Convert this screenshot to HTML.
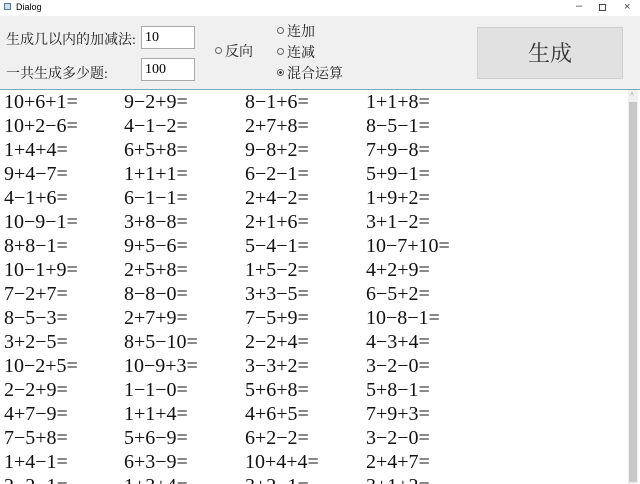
<!DOCTYPE html>
<html><head><meta charset="utf-8"><style>
*{margin:0;padding:0;box-sizing:border-box}
html,body{width:640px;height:484px;overflow:hidden}
body{background:#f0f0f0;font-family:"Liberation Serif","Noto Serif CJK SC",serif;position:relative}
.title{position:absolute;left:0;top:0;width:640px;height:16px;background:#fff;font:9px "Liberation Sans",sans-serif;color:#000}
.a{position:absolute}
.lbl{font-family:"Liberation Serif","Noto Serif CJK SC",serif;font-size:14px;color:#222}
.inp{position:absolute;background:#fff;border:1px solid #aaa;font-size:14px;padding:3px 3px;height:23px}
.rad{display:inline-block;width:7px;height:7px;border:1px solid #666;border-radius:50%;margin-right:3px;vertical-align:middle;position:relative;top:-2px}
.btn{position:absolute;left:477px;top:27px;width:146px;height:52px;background:#e1e1e1;border:1px solid #cfcfcf;font-size:22px;text-align:center;line-height:50px;color:#333;font-family:"Noto Serif CJK SC",serif}
.txt{position:absolute;left:0;top:89px;width:640px;height:395px;background:#fff;border-top:1px solid #7ab;overflow:hidden}
.row{position:absolute;left:0;height:24px;font-size:20px;line-height:24px;color:#111;white-space:nowrap}
.row span{position:absolute;top:0}
.sb{position:absolute;right:2px;top:90px;width:10px;height:394px;background:#f0f0f0}
</style></head><body>
<div class="title"><span class="a" style="left:4px;top:3px;width:7px;height:7px;border:1px solid #579;background:#cde"></span><span class="a" style="left:16px;top:2px">Dialog</span>
<span class="a" style="left:576px;top:0;font-size:11px;color:#444">–</span>
<span class="a" style="left:599px;top:4px;width:7px;height:7px;border:1px solid #444"></span>
<span class="a" style="left:624px;top:1px;font-size:11px;color:#444">×</span></div>
<div class="a lbl" style="left:6px;top:29px">生成几以内的加减法:</div>
<div class="inp" style="left:141px;top:26px;width:54px">10</div>
<div class="a lbl" style="left:6px;top:63px">一共生成多少题:</div>
<div class="inp" style="left:141px;top:58px;width:54px">100</div>
<div class="a lbl" style="left:215px;top:41px"><span class="rad"></span>反向</div>
<div class="a lbl" style="left:277px;top:21px"><span class="rad"></span>连加</div>
<div class="a lbl" style="left:277px;top:42px"><span class="rad"></span>连减</div>
<div class="a lbl" style="left:277px;top:63px"><span class="rad" style="background:radial-gradient(#333 35%,#fff 45%)"></span>混合运算</div>
<div class="btn">生成</div>
<div class="txt">
<div class="row" style="top:0px"><span style="left:4px">10+6+1=</span><span style="left:124px">9−2+9=</span><span style="left:245px">8−1+6=</span><span style="left:366px">1+1+8=</span></div>
<div class="row" style="top:24px"><span style="left:4px">10+2−6=</span><span style="left:124px">4−1−2=</span><span style="left:245px">2+7+8=</span><span style="left:366px">8−5−1=</span></div>
<div class="row" style="top:48px"><span style="left:4px">1+4+4=</span><span style="left:124px">6+5+8=</span><span style="left:245px">9−8+2=</span><span style="left:366px">7+9−8=</span></div>
<div class="row" style="top:72px"><span style="left:4px">9+4−7=</span><span style="left:124px">1+1+1=</span><span style="left:245px">6−2−1=</span><span style="left:366px">5+9−1=</span></div>
<div class="row" style="top:96px"><span style="left:4px">4−1+6=</span><span style="left:124px">6−1−1=</span><span style="left:245px">2+4−2=</span><span style="left:366px">1+9+2=</span></div>
<div class="row" style="top:120px"><span style="left:4px">10−9−1=</span><span style="left:124px">3+8−8=</span><span style="left:245px">2+1+6=</span><span style="left:366px">3+1−2=</span></div>
<div class="row" style="top:144px"><span style="left:4px">8+8−1=</span><span style="left:124px">9+5−6=</span><span style="left:245px">5−4−1=</span><span style="left:366px">10−7+10=</span></div>
<div class="row" style="top:168px"><span style="left:4px">10−1+9=</span><span style="left:124px">2+5+8=</span><span style="left:245px">1+5−2=</span><span style="left:366px">4+2+9=</span></div>
<div class="row" style="top:192px"><span style="left:4px">7−2+7=</span><span style="left:124px">8−8−0=</span><span style="left:245px">3+3−5=</span><span style="left:366px">6−5+2=</span></div>
<div class="row" style="top:216px"><span style="left:4px">8−5−3=</span><span style="left:124px">2+7+9=</span><span style="left:245px">7−5+9=</span><span style="left:366px">10−8−1=</span></div>
<div class="row" style="top:240px"><span style="left:4px">3+2−5=</span><span style="left:124px">8+5−10=</span><span style="left:245px">2−2+4=</span><span style="left:366px">4−3+4=</span></div>
<div class="row" style="top:264px"><span style="left:4px">10−2+5=</span><span style="left:124px">10−9+3=</span><span style="left:245px">3−3+2=</span><span style="left:366px">3−2−0=</span></div>
<div class="row" style="top:288px"><span style="left:4px">2−2+9=</span><span style="left:124px">1−1−0=</span><span style="left:245px">5+6+8=</span><span style="left:366px">5+8−1=</span></div>
<div class="row" style="top:312px"><span style="left:4px">4+7−9=</span><span style="left:124px">1+1+4=</span><span style="left:245px">4+6+5=</span><span style="left:366px">7+9+3=</span></div>
<div class="row" style="top:336px"><span style="left:4px">7−5+8=</span><span style="left:124px">5+6−9=</span><span style="left:245px">6+2−2=</span><span style="left:366px">3−2−0=</span></div>
<div class="row" style="top:360px"><span style="left:4px">1+4−1=</span><span style="left:124px">6+3−9=</span><span style="left:245px">10+4+4=</span><span style="left:366px">2+4+7=</span></div>
<div class="row" style="top:384px"><span style="left:4px">2−2−1=</span><span style="left:124px">1+3+4=</span><span style="left:245px">3+2−1=</span><span style="left:366px">3+1+2=</span></div>
</div>
<div class="sb"><div style="position:absolute;left:1px;top:12px;width:8px;height:380px;background:#c8c8c8"></div><div style="position:absolute;left:2px;top:0;font-size:7px;color:#666">˄</div></div>
</body></html>
